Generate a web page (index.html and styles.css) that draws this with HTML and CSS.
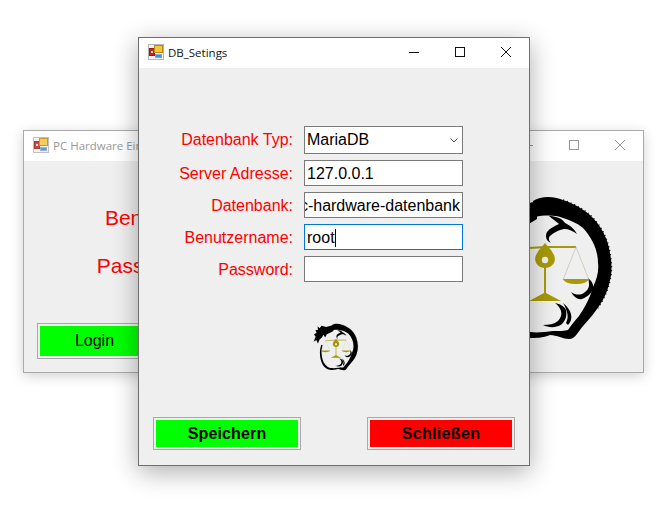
FILE: index.html
```html
<!DOCTYPE html>
<html lang="de">
<head>
<meta charset="utf-8">
<title>DB_Setings</title>
<link rel="stylesheet" href="styles.css">
</head>
<body>
<svg class="defs" width="0" height="0" aria-hidden="true">
  <symbol id="app" viewBox="0 0 16 16">
    <rect x=".5" y=".5" width="15" height="15" fill="#f2f2f2" stroke="#b5b5b5"/>
    <rect x="1.5" y="4.5" width="5" height="7" fill="#c8261c" stroke="#8c1d16"/>
    <rect x="3" y="7" width="2" height="2" fill="#f4d0c8"/>
    <rect x="6.5" y="1.5" width="8" height="7" fill="#f5c636" stroke="#b98a14"/>
    <rect x="7.5" y="10.5" width="6" height="3" fill="#4c86d8" stroke="#7fa6de"/>
  </symbol>
  <symbol id="dragon" viewBox="0 0 140 146">
    <path class="ink" fill-rule="evenodd" d="M58 6C66 1 78 1 88 5C100 9 108 14 115 20C126 30 133 44 135 58C137 68 137 78 135 85C133 96 128 106 122 114C116 123 108 130 102 139C100 142 97 144 94 144C88 144 82 140 75 140C68 143 60 143 55 143C44 142 36 137 30 128C24 118 21 104 21 90C21 82 23 74 25 66L29 68C27 76 26 84 26 92C27 106 30 118 37 126C42 132 48 136 55 137C62 138 70 137 78 136C84 136 90 136 93 135C96 130 100 126 104 121C110 112 115 103 118 92C122 84 124 76 123 68C123 56 118 44 108 33C102 28 95 25 88 23C80 20 70 20 60 22Z"/>
    <path class="spikes" d="M88 5C100 9 108 14 115 20C126 30 133 44 135 58C137 68 137 78 135 85C133 96 128 106 122 114"/>
    <path class="ink" d="M62 6L40 12L26 8L20 16L14 10L15 21L7 22L11 29L3 36L8 41L2 57L10 52L15 62L20 50L27 44L32 36L37 44L42 34L52 30L62 24Z"/>
    <path class="ink" d="M74 21C80 21 87 23 90 28C94 30 99 33 102 39C98 36 94 34 89 34C84 35 78 38 75 41C73 43 74 46 76 48C71 46 70 41 72 37C75 33 80 31 84 29C81 26 77 24 74 21Z"/>
    <path class="ink" d="M113 83C117 86 119 90 118 94C116 99 112 102 107 104C103 105 99 102 96 97C100 100 104 100 107 99C111 97 114 94 114 90C114 88 114 86 113 83Z"/>
    <path class="ink" d="M80 108C85 109 89 111 91 115C92 120 91 125 87 129C82 133 74 133 68 130C74 130 79 129 83 126C86 123 87 119 86 116C85 113 83 110 80 108Z"/>
    <path class="ink" d="M88 108C92 111 95 115 96 119C97 123 96 127 93 130L91 128C93 124 93 120 92 117C91 114 90 111 88 108Z"/>
    <path class="gold-line" d="M38 54L70 52L101 52"/>
    <path class="thread" d="M101 52L88 85M101 52L114 85M38 54L24 85M38 54L52 85"/>
    <path class="gold" d="M88 84H114Q112 89 101 89Q90 89 88 84ZM24 84H52Q50 89 38 89Q26 89 24 84Z"/>
    <path class="gold" d="M69 58H71V98L86 106H54L69 98Z"/>
    <path class="gold" d="M70 48L76 55L79 60C82 67 77 73 70 73C63 73 58 67 61 60L64 55Z"/>
    <circle class="bg" cx="70" cy="65" r="3.2"/>
  </symbol>
</svg>

<section class="window back">
  <header class="titlebar">
    <svg class="app-icon"><use href="#app"/></svg>
    <span class="title">PC Hardware Einstellungen</span>
    <span class="controls">
      <svg class="ctl" viewBox="0 0 10 10"><path d="M0 5.5H10"/></svg>
      <svg class="ctl" viewBox="0 0 10 10"><rect x=".5" y=".5" width="9" height="9"/></svg>
      <svg class="ctl" viewBox="0 0 10 10"><path d="M0 0L10 10M10 0L0 10"/></svg>
    </span>
  </header>
  <div class="back-body">
    <div class="back-labels">
      <span>Benutzer</span>
      <span>Passwort:</span>
    </div>
    <button class="btn login" type="button">Login</button>
    <svg class="logo-big"><use href="#dragon"/></svg>
  </div>
</section>

<section class="window front">
  <header class="titlebar">
    <svg class="app-icon"><use href="#app"/></svg>
    <span class="title">DB_Setings</span>
    <span class="controls">
      <svg class="ctl" viewBox="0 0 10 10"><path d="M0 5.5H10"/></svg>
      <svg class="ctl" viewBox="0 0 10 10"><rect x=".5" y=".5" width="9" height="9"/></svg>
      <svg class="ctl" viewBox="0 0 10 10"><path d="M0 0L10 10M10 0L0 10"/></svg>
    </span>
  </header>
  <div class="front-body">
    <form class="form">
      <label class="first">Datenbank Typ:</label>
      <div class="field combo"><span>MariaDB</span><svg class="chev" viewBox="0 0 8 5"><path d="M.5 .5L4 4L7.5 .5"/></svg></div>
      <label>Server Adresse:</label>
      <div class="field"><span>127.0.0.1</span></div>
      <label>Datenbank:</label>
      <div class="field scrolled"><span>pc-hardware-datenbank</span></div>
      <label>Benutzername:</label>
      <div class="field focus"><span>root</span><i class="caret"></i></div>
      <label>Password:</label>
      <div class="field"></div>
    </form>
    <svg class="logo-small"><use href="#dragon"/></svg>
    <div class="actions">
      <button class="btn save" type="button">Speichern</button>
      <button class="btn close" type="button">Schließen</button>
    </div>
  </div>
</section>
</body>
</html>
```

FILE: styles.css
```css
* { box-sizing: border-box; }
html, body { margin: 0; height: 100%; }
body {
  position: relative;
  width: 665px;
  height: 519px;
  overflow: hidden;
  background: #fff;
  font-family: "Liberation Sans", Arial, sans-serif;
}
.defs { position: absolute; }

.window {
  position: absolute;
  display: flex;
  flex-direction: column;
  background: #efefef;
}
.back {
  left: 23px; top: 130px;
  width: 621px; height: 243px;
  border: 1px solid #aaa;
  box-shadow: 0 3px 12px rgba(0,0,0,.18);
}
.front {
  left: 138px; top: 37px;
  width: 392px; height: 429px;
  border: 1px solid #6f6f6f;
  box-shadow: 0 6px 24px rgba(0,0,0,.32);
}

.titlebar {
  display: flex;
  align-items: center;
  height: 30px;
  flex: none;
  padding: 0 0 2px 9px;
  background: #fff;
}
.app-icon { width: 16px; height: 16px; flex: none; }
.title {
  margin-left: 4px;
  font: 11.5px "Open Sans", "Noto Sans", sans-serif;
  color: #111;
  white-space: nowrap;
}
.controls {
  display: flex;
  gap: 36px;
  margin-left: auto;
  padding-right: 18px;
}
.ctl { width: 10px; height: 10px; fill: none; stroke: #111; stroke-width: 1; }
.back .title { color: #999; }
.back .ctl { stroke: #999; }
.back .app-icon { opacity: .85; }

/* back window */
.back-body { flex: 1; position: relative; }
.back-labels {
  display: flex;
  flex-direction: column;
  align-items: flex-end;
  gap: 24px;
  width: 165px;
  padding-top: 45px;
  font-size: 21px;
  line-height: 24px;
  color: #f00;
}
.login {
  position: absolute;
  left: 13px; top: 162px;
  width: 115px; height: 36px;
  padding-top: 2px;
  background: #0f0;
  font-size: 16px;
}
.logo-big {
  position: absolute;
  left: 451px; top: 34px;
  width: 140px; height: 146px;
}

/* front window */
.front-body {
  flex: 1;
  display: flex;
  flex-direction: column;
  padding: 58px 14px 15px;
}
.form {
  display: grid;
  grid-template-columns: 140px 159px;
  column-gap: 11px;
  row-gap: 6px;
  font-size: 16px;
}
.form label {
  display: flex;
  align-items: center;
  justify-content: flex-end;
  padding-top: 2px;
  color: #f00;
}
.form label.first { padding-top: 0; }
.field {
  position: relative;
  display: flex;
  align-items: center;
  height: 26px;
  padding: 2px 2px 0;
  background: #fff;
  border: 1px solid #7a7a7a;
  color: #000;
  white-space: nowrap;
  overflow: hidden;
}
.combo { height: 28px; padding-top: 0; justify-content: space-between; }
.chev { width: 8px; height: 5px; margin-right: 2px; fill: none; stroke: #555; stroke-width: 1; }
.scrolled { justify-content: flex-end; }
.scrolled span { flex: none; }
.focus { border-color: #0078d7; }
.caret { width: 1px; height: 18px; background: #000; }

.logo-small {
  align-self: flex-start;
  width: 46px; height: 48px;
  margin: 41px 0 0 160px;
}
.actions {
  display: flex;
  justify-content: space-between;
  margin-top: auto;
}
.btn {
  display: block;
  padding: 0;
  border: 1px solid #a9a9a9;
  outline: 2px solid #efefef;
  outline-offset: -3px;
  color: #000;
  font-family: "Liberation Sans", Arial, sans-serif;
  cursor: default;
}
.save, .close {
  width: 148px; height: 33px;
  font-size: 16px;
  font-weight: bold;
}
.save { background: #0f0; letter-spacing: .15px; }
.close { background: #f00; letter-spacing: .35px; }

.ink { fill: #000; }
.spikes { fill: none; stroke: #000; stroke-width: 1.5; stroke-dasharray: 1 3; }
.bg { fill: #efefef; }
.gold { fill: #a69a08; }
.gold-line { fill: none; stroke: #a69a08; stroke-width: 2; }
.thread { fill: none; stroke: #b9b9a0; stroke-width: .6; }
```
